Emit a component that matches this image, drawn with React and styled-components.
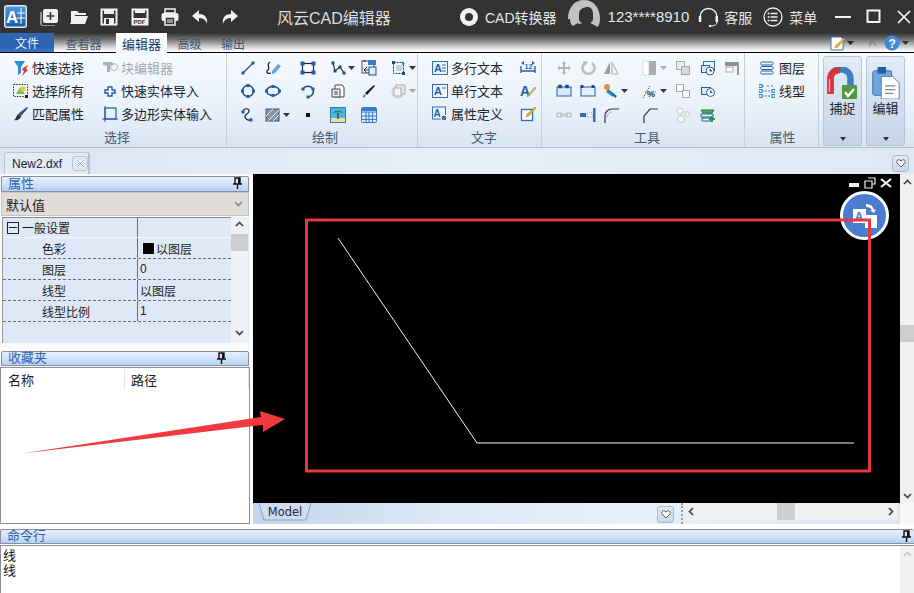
import React from "react";
import styled, { createGlobalStyle } from "styled-components";

const FONT = `"Liberation Sans","Noto Sans CJK SC",sans-serif`;
const Global = createGlobalStyle`
  html,body{margin:0;padding:0;background:#fff;overflow:hidden;}
  *{box-sizing:border-box;}
`;
const Page = styled.div`
  position:relative;width:914px;height:593px;overflow:hidden;display:flex;flex-direction:column;
  font-family:${FONT};font-size:13px;color:#1d1d1d;background:#fff;
`;
/* ---------- title bar ---------- */
const TitleBar = styled.header`
  height:33px;flex:none;background:#333;display:flex;align-items:center;color:#e4e4e4;
`;
const Logo = styled.div`margin-left:4px;width:23px;height:23px;flex:none;display:flex;`;
const QuickTools = styled.div`
  margin-left:13px;display:grid;grid-template-columns:repeat(7,18px);column-gap:12.2px;align-items:center;
  width:196px;flex:none;
`;
const AppTitle = styled.div`margin-left:41px;width:114px;flex:none;font-size:16px;color:#dcdcdc;white-space:nowrap;letter-spacing:0;`;
const ConvertIcon = styled.div`margin-left:69px;width:18px;height:18px;flex:none;display:flex;`;
const TopLabel = styled.span`font-size:${p=>p.$size||14}px;margin-left:${p=>p.$ml||0}px;white-space:nowrap;flex:none;color:#e6e6e6;`;
const Avatar = styled.div`margin-left:11px;width:32px;height:33px;flex:none;display:flex;`;
const TopIcon = styled.div`margin-left:${p=>p.$ml}px;width:${p=>p.$w}px;height:20px;flex:none;display:flex;`;
const WinButtons = styled.div`margin-left:18px;display:grid;grid-template-columns:16px 16px 14px;column-gap:15px;align-items:center;flex:none;`;

/* ---------- ribbon tabs ---------- */
const TabRow = styled.nav`
  height:20px;flex:none;display:flex;align-items:flex-end;position:relative;
  background:linear-gradient(180deg,#333 0%,#6e6e6e 30%,#c8c8c8 65%,#fff 92%,#fff 94%,#000 95%,#000 100%);
`;
const FileTab = styled.div`
  width:54px;height:19px;background:linear-gradient(180deg,#2f68b5,#2a62b0 70%,#3a74c2);color:#e8f0fb;font-size:12px;
  display:flex;align-items:center;justify-content:center;align-self:flex-start;margin-top:0;
`;
const RibbonTab = styled.div`
  font-size:${p=>p.$active?13:12}px;color:${p=>p.$active?"#1d3f63":"#3f556e"};margin-left:${p=>p.$ml}px;
  height:20px;padding:0 6px;display:flex;align-items:center;white-space:nowrap;flex:none;
  background:${p=>p.$active?"linear-gradient(180deg,#fff,#f4f8fd)":"transparent"};
  width:${p=>p.$w}px;justify-content:center;
`;
const TabTools = styled.div`margin-left:auto;display:flex;align-items:center;height:19px;padding-right:5px;align-self:flex-start;`;

/* ---------- ribbon ---------- */
const Ribbon = styled.section`
  height:95px;flex:none;display:flex;background:linear-gradient(180deg,#f7fafe 0%,#eaf1fa 55%,#d9e4f3 100%);
  border-bottom:1px solid #b4bfcc;
`;
const Group = styled.div`
  width:${p=>p.$w}px;flex:none;display:flex;flex-direction:column;border-right:${p=>p.$noline?"0":"1px solid #c5d0de"};
  padding-left:${p=>p.$pl||0}px;padding-top:3px;
`;
const GroupBody = styled.div`height:73px;display:flex;`;
const GroupLabel = styled.div`
  height:18px;font-size:13px;line-height:18px;text-align:center;color:#4a5a6c;margin-left:${p=>-(p.$pl||0)}px;padding-left:${p=>p.$dx||0}px;
`;
const TextCol = styled.div`display:grid;grid-template-rows:repeat(3,23px);grid-auto-rows:23px;margin-right:${p=>p.$mr||0}px;`;
const Cmd = styled.div`
  display:flex;align-items:center;gap:3px;font-size:13px;white-space:nowrap;color:${p=>p.$off?"#a3a8ae":"#20252b"};
`;
const IconGrid = styled.div`
  display:grid;grid-template-columns:${p=>p.$cols};grid-template-rows:23.5px 23.5px 23px;align-items:center;justify-items:start;
`;
const Cell = styled.div`display:flex;align-items:center;`;
const BigButtons = styled.div`display:flex;gap:4px;padding:3px 0 0 4px;`;
const BigButton = styled.div`
  width:39px;height:90px;border:1px solid #b6c6da;border-radius:3px;background:linear-gradient(180deg,#e3ebf6,#cfdcec 65%,#c5d5e9);
  display:flex;flex-direction:column;align-items:center;padding-top:10px;font-size:13px;color:#20252b;
`;
const BigLabel = styled.div`margin-top:2px;white-space:nowrap;line-height:15px;`;
const BigCaret = styled.div`margin-top:auto;margin-bottom:4px;width:0;height:0;border:3px solid transparent;border-top:4px solid #333;border-bottom:0;`;

/* ---------- document strip ---------- */
const DocStrip = styled.div`
  height:26px;flex:none;background:linear-gradient(90deg,#dbe5f2,#e8eff8 50%,#dfe8f4);display:flex;align-items:flex-end;position:relative;
`;
const DocTab = styled.div`
  margin-left:4px;width:86px;height:22px;background:#e4ebf4;border:1px solid #bcc8d6;border-bottom:0;border-radius:3px 3px 0 0;
  display:flex;align-items:center;padding-left:7px;font-size:12px;color:#223;border-right:2px solid #b5c1d0;
`;
const DocClose = styled.div`
  margin-left:10px;width:16px;height:15px;border:1px solid #b6c6d8;border-radius:3px;background:#dce6f2;display:flex;align-items:center;justify-content:center;
`;
const HeartBtn = styled.div`
  width:17px;height:17px;border:1px solid #a9bcd2;border-radius:3px;background:linear-gradient(180deg,#dfe9f5,#c8d8ea);
  display:flex;align-items:center;justify-content:center;flex:none;
`;
const DocHeart = styled.div`margin-left:auto;margin-right:5px;margin-bottom:2px;`;

/* ---------- main ---------- */
const Main = styled.main`height:350px;flex:none;display:flex;`;
const LeftCol = styled.aside`width:250px;flex:none;display:flex;flex-direction:column;background:#fafafa;padding-top:2px;`;
const DockTitle = styled.div`
  height:${p=>p.$h||16}px;flex:none;margin:0 1px;border:1px solid #8b8f96;border-radius:2px 2px 0 0;display:flex;align-items:center;justify-content:space-between;
  padding:0 ${p=>p.$pr||6}px 2px 6px;font-size:13px;line-height:1;color:#2f62a8;background:linear-gradient(180deg,#e6effc,#cfe1fa 55%,#b4d0f7);
`;
const Combo = styled.div`
  height:24px;flex:none;margin:0 1px;background:#dfdcd9;border:1px solid #c4c4c4;display:flex;align-items:center;justify-content:space-between;
  padding:0 5px 0 4px;font-size:13px;color:#222;
`;
const PropArea = styled.div`
  height:126px;flex:none;margin:1px 1px 0 2px;display:flex;background:#dfe8f6;border-left:1px solid #9a9a9a;
`;
const PropTable = styled.div`width:228px;flex:none;display:flex;flex-direction:column;`;
const PropRow = styled.div`
  height:${p=>p.$h||21}px;flex:none;display:grid;grid-template-columns:135px 1fr;font-size:12px;
  border-bottom:${p=>p.$head?"1px solid #f4f7fc":"1px dashed #6d6f73"};
  border-top:${p=>p.$head?"1px solid #8a8a8a":"0"};
`;
const PropName = styled.div`
  display:flex;align-items:center;padding-left:${p=>p.$head?4:39}px;border-right:1px solid #6d6f73;gap:3px;white-space:nowrap;
`;
const PropValue = styled.div`display:flex;align-items:center;padding-left:2px;gap:2px;white-space:nowrap;`;
const ColorSwatch = styled.span`width:11px;height:11px;background:#000;margin-left:3px;flex:none;`;
const Expander = styled.span`
  width:12px;height:12px;border:1px solid #222;display:flex;align-items:center;justify-content:center;flex:none;
  &::before{content:"";width:8px;height:1px;background:#222;}
`;
const VScroll = styled.div`
  width:${p=>p.$w||17}px;flex:none;background:${p=>p.$bg||"#eef1f7"};display:flex;flex-direction:column;align-items:center;padding:${p=>p.$pad||"4px 0 7px"};
`;
const VThumb = styled.div`
  width:100%;height:17px;background:#cdcdcd;margin-top:${p=>p.$mt}px;flex:none;
`;
const ScrollEnd = styled.div`margin-top:auto;display:flex;`;
const Gap = styled.div`height:${p=>p.$h}px;flex:none;`;
const ListBox = styled.div`
  flex:1;margin:1px 0 0 0;width:250px;background:#fff;border:1px solid #8b8f96;border-bottom:1px solid #8b8f96;
`;
const ListHead = styled.div`display:grid;grid-template-columns:124px 1fr;height:20px;align-items:center;font-size:13px;margin-top:1px;`;
const ListCol = styled.div`padding-left:${p=>p.$pl}px;height:20px;display:flex;align-items:center;border-right:1px solid #e4e4e4;`;
const CanvasCol = styled.div`margin-left:3px;width:647px;flex:none;display:flex;flex-direction:column;`;
const CanvasArea = styled.div`height:329px;flex:none;background:#000;position:relative;`;
const CanvasDrawing = styled.svg`display:block;width:647px;height:329px;`;
const MdiButtons = styled.div`position:absolute;top:3px;right:8px;display:flex;gap:4px;align-items:center;`;
const FloatBadge = styled.div`
  position:absolute;left:587px;top:17px;width:49px;height:49px;border-radius:50%;border:3px solid #fff;background:#4a7cd0;
  display:flex;align-items:center;justify-content:center;
`;
const TabStrip = styled.div`
  height:21px;flex:none;background:linear-gradient(90deg,#c3d5ea 0%,#dce8f5 30%,#e8f1fb 60%,#dbe6f3 100%);display:flex;align-items:flex-start;
`;
const ModelTab = styled.div`
  position:relative;margin-left:5px;width:54px;height:18px;flex:none;font-size:11.5px;color:#1e2a44;display:flex;align-items:center;justify-content:center;
  font-family:"DejaVu Sans",sans-serif;
`;
const ModelShape = styled.svg`position:absolute;inset:0;width:54px;height:18px;`;
const ModelText = styled.span`position:relative;`;
const HeartSlot = styled.div`margin-left:345px;margin-top:3px;`;
const DottedSep = styled.div`margin-left:7px;width:2px;height:21px;border-left:2px dotted #8fa0b3;flex:none;`;
const HScroll = styled.div`
  margin-left:1px;width:214px;height:17px;flex:none;background:#f0f0f0;display:flex;align-items:center;justify-content:space-between;padding:0 4px;position:relative;
`;
const HThumb = styled.div`position:absolute;left:93px;top:0;width:18px;height:17px;background:#cdcdcd;`;
const RightBar = styled.div`
  width:14px;flex:none;height:329px;background:#f0f0f0;display:flex;flex-direction:column;align-items:center;padding:5px 0 4px;
`;
const RightFill = styled.div`flex:1;width:14px;background:#f8f8f8;`;
const RightSide = styled.div`display:flex;flex-direction:column;width:14px;flex:none;background:#fff;`;

/* ---------- command ---------- */
const Spacer = styled.div`height:5px;flex:none;background:#fff;`;
const CmdPanel = styled.section`height:64px;flex:none;display:flex;flex-direction:column;`;
const CmdBar = styled(DockTitle)`margin:0;border-left:1px solid #8b8f96;border-right:0;padding-right:3px;height:15px;`;
const CmdBody = styled.div`flex:1;display:flex;margin-top:1px;border-top:1px solid #8b8f96;border-left:1px solid #8b8f96;background:#fff;`;
const CmdText = styled.div`flex:1;padding:2px 0 0 2px;font-size:13px;line-height:15px;color:#111;`;

/* ---------- overlay ---------- */
const Annot = styled.svg`position:absolute;left:0;top:0;width:914px;height:593px;pointer-events:none;`;

/* ---------- icons ---------- */
const Svg = ({w=16,h=16,vb,children})=>(<svg width={w} height={h} viewBox={vb||`0 0 ${w} ${h}`} style={{display:"block",flex:"none"}}>{children}</svg>);
const B="#1f5ea8", D="#174a8a", G="#a9adb2";
const handle=(x,y,c=B,s=3)=><rect x={x-s/2} y={y-s/2} width={s} height={s} fill={c}/>;
const Caret=({c="#333"})=><svg width="7" height="4" viewBox="0 0 7 4" style={{marginLeft:2,flex:"none"}}><path d="M0 0h7L3.5 4z" fill={c}/></svg>;

const I={
 funnel:<Svg><path d="M1 1h11L8 7v6L5 15V7z" fill="#2e8fd0"/><path d="M10 8l5-3-2 4 2 1-6 6 2-5-2-1z" fill="#e23a3a"/></Svg>,
 selAll:<Svg><rect x=".5" y="1.5" width="14" height="12" fill="none" stroke="#333" strokeDasharray="1.5 1.2"/><path d="M3 11l4-7 5 7z" fill="#7ec24c"/><path d="M7 4h5v4H7z" fill="#e8c24a"/><rect x="12" y="12" width="3" height="3" fill="#222"/></Svg>,
 brush:<Svg><path d="M14 1l1 1-7 8-3-2z" fill="#2c4f8a"/><path d="M5 8l3 2c0 3-4 5-7 4 2-1 2-4 4-6z" fill="#333"/></Svg>,
 block:<Svg><path d="M1 2h9l2 3-4 1v6H5V6L1 5z" fill="#b0b0b0"/><circle cx="12" cy="7" r="3.5" fill="none" stroke="#b5b5b5"/></Svg>,
 cross:<Svg><path d="M6 4h4v3h3v3h-3v3H6v-3H3V7h3z" fill="#fff" stroke={B} strokeWidth="1.4"/></Svg>,
 poly:<Svg><rect x="3" y="2" width="11" height="11" fill="none" stroke={B} strokeWidth="1.2"/><path d="M0 13h16M3 0v16" stroke={B}/></Svg>,
 line:<Svg><path d="M3 13L13 3" stroke={D} strokeWidth="1.3"/>{handle(3,13)}{handle(13,3)}</Svg>,
 pline:<Svg><path d="M5 2C0 5 7 8 2 11c-1 2 2 3 4 2" stroke="#223" fill="none" strokeWidth="1.2"/><path d="M7 11l6-7 3 2-6 7-3 1z" fill="#6a9fd8"/></Svg>,
 circle:<Svg><circle cx="8" cy="8" r="5.5" fill="none" stroke={D} strokeWidth="1.4"/>{handle(8,2.5)}{handle(2.5,8)}{handle(13.5,8)}{handle(8,13.5)}</Svg>,
 ellipse:<Svg><ellipse cx="8" cy="8" rx="6.5" ry="4.5" fill="none" stroke={D} strokeWidth="1.4"/>{handle(8,3.5)}{handle(1.5,8)}{handle(14.5,8)}{handle(8,12.5)}</Svg>,
 spline:<Svg><path d="M3 4c1-3 6-3 6 0 0 3-5 3-4 6 1 3 4 4 6 2" fill="none" stroke="#223" strokeWidth="1.2"/>{handle(3,5)}{handle(11,13)}</Svg>,
 hatch:<Svg><rect x="1" y="2" width="13" height="12" fill="#8f949a" stroke={B}/><path d="M1 9l7-7M3 14L14 3M8 14l6-6" stroke="#e8e8e8"/></Svg>,
 rect:<Svg><rect x="2.5" y="3.5" width="11" height="9" fill="none" stroke="#223" strokeWidth="1.2"/>{handle(2.5,3.5,B,4)}{handle(13.5,3.5,B,4)}{handle(2.5,12.5,B,4)}{handle(13.5,12.5,B,4)}</Svg>,
 polyline:<Svg><path d="M3 3l2 8 5-4 4 6" fill="none" stroke="#334" strokeWidth="1.2"/>{handle(3,3,D,3)}{handle(5,11,D,3)}{handle(10,7,D,3)}{handle(14,13,D,3)}</Svg>,
 arc:<Svg><path d="M3 6a6 6 0 0 1 10 0 6 6 0 0 1-4 8" fill="none" stroke={D} strokeWidth="1.4"/>{handle(3,6)}{handle(13,6)}{handle(8,14)}</Svg>,
 doc3d:<Svg><path d="M5 2h7l2 2v10H5z" fill="#fff" stroke="#445"/><path d="M2 6h8v8H2z" fill="#eee" stroke="#445"/><path d="M4 9h4M4 11h4" stroke="#445"/></Svg>,
 dot:<Svg><rect x="6" y="6" width="4" height="4" fill="#111"/></Svg>,
 image:<Svg><rect x=".5" y=".5" width="15" height="15" fill="#47b7e8" stroke="#3a78b8"/><rect x="1" y="11" width="14" height="4" fill="#f3df9a"/><path d="M8 12V6" stroke="#5a3a1a" strokeWidth="1.4"/><path d="M3 6c2-3 8-3 10 0-3-1-7-1-10 0z" fill="#1d8a3a"/></Svg>,
 pen:<Svg><path d="M13 2l1 1-8 9-2-2z" fill="#1c1c1c"/><path d="M3 11l2 2-3 2z" fill="#2a5aa0"/></Svg>,
 table:<Svg><rect x=".5" y=".5" width="15" height="15" fill="#dbeafb" stroke="#3a78c8" rx="1"/><path d="M1 5h14M1 9h14M1 12.5h14M5 5v11M8 5v11M11.5 5v11" stroke="#3a78c8"/><rect x="1" y="1" width="14" height="3" fill="#3a78c8"/></Svg>,
 copyA:<Svg><rect x="1" y="1" width="12" height="12" fill="#f2f6fb" stroke="#2c4f8a"/><rect x="7" y="0" width="8" height="5" fill="#3a78c8"/><rect x="2" y="0" width="3" height="2" fill="#d33"/><path d="M3 10h7M6 7l-3 3 3 3" stroke="#333" fill="none"/><rect x="8" y="7" width="7" height="8" fill="#dfeafa" stroke="#2c4f8a"/></Svg>,
 stamp:<Svg><rect x="2.5" y="2.5" width="10" height="11" fill="none" stroke="#334" strokeDasharray="2 1"/><rect x="5" y="5" width="6" height="6" fill="#b8d4f2"/><path d="M11 1l3 3-3 1z" fill="#3a78c8"/>{handle(2.5,2.5,D)}{handle(12.5,13.5,D)}</Svg>,
 offcopy:<Svg><circle cx="7" cy="9" r="6" fill="#ededed" stroke="#c8c8c8"/><rect x="5" y="2" width="9" height="9" fill="#e4e4e4" stroke={G}/><rect x="3" y="5" width="7" height="8" fill="#f4f4f4" stroke={G}/></Svg>,
 mtext:<Svg><rect x=".5" y="1.5" width="15" height="13" fill="#eef5fd" stroke="#2f6eb8"/><text x="2" y="12" fontSize="11" fontFamily="Liberation Sans" fill="#1f5ea8" fontWeight="700">A</text><path d="M10 5h4M10 8h4M10 11h4" stroke="#2f6eb8"/></Svg>,
 stext:<Svg><rect x=".5" y="1.5" width="15" height="13" fill="#eef5fd" stroke="#2f6eb8"/><text x="2" y="12" fontSize="11" fontFamily="Liberation Sans" fill="#1f5ea8" fontWeight="700">A</text><path d="M10 5h4" stroke="#2f6eb8"/></Svg>,
 attr:<Svg><rect x=".5" y="1" width="13" height="12" fill="#eef5fd" stroke="#2f6eb8"/><text x="1.5" y="11" fontSize="10" fontFamily="Liberation Sans" fill="#1f5ea8" fontWeight="700">A</text><circle cx="12" cy="12" r="3" fill="#5b6f88" stroke="#fff"/></Svg>,
 dimtext:<Svg><text x="4.5" y="9" fontSize="7" fontFamily="Liberation Sans" fontWeight="700" fill="#1f5ea8">12</text><path d="M1 11h14M1 6v7M15 6v7" stroke="#1f5ea8" strokeWidth="1.3"/><path d="M1 3l3 2v-4zM15 3l-3 2v-4z" fill="#1f5ea8"/></Svg>,
 textstyle:<Svg><text x="0" y="13" fontSize="14" fontFamily="Liberation Sans" fontWeight="700" fill="#2c5a9c">A</text><path d="M15 4l1 1-7 8-2 1 1-2z" fill="#e7b534" stroke="#8a6a1a" strokeWidth=".4"/></Svg>,
 note:<Svg><rect x="1.5" y="3.5" width="11" height="11" fill="#fff" stroke="#2f6eb8" strokeWidth="1.3"/><path d="M15 1l1 1-7 8-3 1 1-3z" fill="#e7b534" stroke="#8a6a1a" strokeWidth=".4"/></Svg>,
 move:<Svg><path d="M8 1l2.5 3H9v3h3V5.5L15 8l-3 2.5V9H9v3h1.5L8 15l-2.5-3H7V9H4v1.5L1 8l3-2.5V7h3V4H5.5z" fill="#b4b7bb"/></Svg>,
 rotate:<Svg><path d="M5 3a6 6 0 1 0 7 0" fill="none" stroke="#b9bcc0" strokeWidth="2.4"/><path d="M3 1l5 1-3 4z" fill="#b4b7bb"/></Svg>,
 mirror:<Svg><path d="M7 2v12H1z" fill="#9a9da1"/><path d="M9 2v12h6z" fill="#f4f4f4" stroke="#a9adb2"/></Svg>,
 layerG:<Svg><rect x="1" y="1" width="13" height="14" fill="#a9adb2"/><rect x="1" y="1" width="6" height="14" fill="#fff" stroke="#bbb" strokeDasharray="1 1"/></Svg>,
 twoG:<Svg><rect x="1.5" y="1.5" width="8" height="8" fill="#eee" stroke="#a4a7ab"/><rect x="6.5" y="6.5" width="8" height="8" fill="#d5d7da" stroke="#a4a7ab"/></Svg>,
 twoW:<Svg><rect x="1.5" y="1.5" width="7" height="7" fill="#fff" stroke="#a4a7ab"/><rect x="7.5" y="7.5" width="7" height="7" fill="#fff" stroke="#a4a7ab"/></Svg>,
 clock1:<Svg><rect x="3.5" y="1.5" width="11" height="9" fill="#eef5fd" stroke="#2f6eb8"/><rect x="1.5" y="5.5" width="8" height="7" fill="#dbeafb" stroke="#1f5ea8"/><circle cx="10" cy="11" r="4" fill="#fff" stroke="#1f5ea8"/><path d="M10 9v2h2" stroke="#1f5ea8"/></Svg>,
 clock2:<Svg><rect x="1.5" y="4.5" width="9" height="7" fill="#dbeafb" stroke="#1f5ea8"/><circle cx="10.5" cy="9.5" r="4" fill="#fff" stroke="#1f5ea8"/><path d="M10.5 7.5v2h2" stroke="#1f5ea8"/></Svg>,
 tbar:<Svg><rect x="1" y="2" width="12" height="4" fill="#8f8f8f"/><rect x="2" y="7" width="7" height="5" fill="#fff" stroke="#aaa"/><rect x="13" y="2" width="2" height="13" fill="#9a9a9a"/></Svg>,
 trimL:<Svg><rect x="1" y="4" width="14" height="9" fill="#dbeafb" stroke={B}/>{handle(4,3.5,D,3.5)}{handle(11,3.5,D,3.5)}</Svg>,
 trimR:<Svg><rect x="1" y="4" width="14" height="9" fill="#e6f0fb" stroke={B}/>{handle(2,3.5,D,3)}{handle(13,3.5,D,3)}</Svg>,
 paint:<Svg><circle cx="4" cy="4" r="3" fill="#ef8a2a"/><path d="M5 6l7 5-2 3-7-5z" fill="#2f7fc8"/><path d="M10 11l4 2-2 2z" fill="#164a8a"/></Svg>,
 scale:<Svg><path d="M1 15L8 3" stroke="#555" strokeDasharray="1.5 1"/><text x="5" y="14" fontSize="9" fontFamily="Liberation Sans" fontWeight="700" fill="#333">%</text><path d="M3 9h11" stroke="#777" strokeDasharray="1 1"/></Svg>,
 dots:<Svg><rect x="1" y="6" width="4" height="4" fill="none" stroke="#b5b5b5"/><rect x="6" y="7" width="4" height="2" fill="none" stroke="#b5b5b5"/><rect x="11" y="6" width="4" height="4" fill="none" stroke="#b5b5b5"/></Svg>,
 stretch:<Svg><rect x="0" y="6" width="6" height="4" fill="#2f6eb8"/><rect x="7" y="6" width="5" height="4" fill="#fff" stroke="#999" strokeDasharray="1 1"/><rect x="13" y="1" width="2.5" height="14" fill="#2f6eb8"/></Svg>,
 fillet:<Svg><path d="M2 16V9C2 5 5 2 9 2h7" fill="none" stroke="#334" strokeWidth="1.2"/><path d="M4 10c0-2 2-5 5-5" fill="none" stroke="#3a78c8" strokeDasharray="1 1"/></Svg>,
 chamfer:<Svg><path d="M2 16V9l6-7h8" fill="none" stroke="#334" strokeWidth="1.2"/><path d="M3 8l5-5" stroke="#3a78c8" strokeDasharray="1 1"/></Svg>,
 balls:<Svg><circle cx="5" cy="4" r="3" fill="#f6f6f6" stroke="#c8c8c8"/><circle cx="6" cy="12" r="3.5" fill="#f6f6f6" stroke="#c4c4c4"/><circle cx="12" cy="7" r="2.5" fill="#efefef" stroke="#ccc"/></Svg>,
 layAdd:<Svg><path d="M1 3h13l-2 3H3z" fill="#4fb25a" stroke="#2a7a33"/><path d="M1 7h12v3H1zM2 11h9v3H2z" fill="#e7f2fb" stroke="#1f5ea8"/><path d="M9 12h6M12 9v6" stroke="#1f9a2d" strokeWidth="2"/></Svg>,
 layers:<Svg><path d="M3 2h9c3 0 3 3 0 3H3C1 5 1 2 3 2zM3 6.5h9c3 0 3 3 0 3H3c-2 0-2-3 0-3zM3 11h9c3 0 3 3 0 3H3c-2 0-2-3 0-3z" fill="#f0f6fd" stroke="#1f5ea8"/></Svg>,
 ltype:<Svg><path d="M3 3h3M8 3h2M12 3h2M3 8h10M3 13h10" stroke="#3a78c8" strokeDasharray="2 1"/><rect x="0" y="1.5" width="3" height="3" fill="none" stroke="#1f8ad0"/><rect x="0" y="6.5" width="3" height="3" fill="none" stroke="#1f8ad0"/><rect x="0" y="11.5" width="3" height="3" fill="none" stroke="#1f8ad0"/><rect x="13" y="11.5" width="3" height="3" fill="none" stroke="#1f8ad0"/><rect x="13" y="6.5" width="3" height="3" fill="none" stroke="#1f8ad0"/></Svg>,
};
const Magnet=()=><Svg w={31} h={32}><path d="M3.500 27V12C3.500 -1 23.500 -1 23.500 12v8" fill="none" stroke="#3f7fc4" strokeWidth="6.500"/><path d="M3.500 27V12C3.500 3 13 3 13 3" fill="none" stroke="#d8353a" strokeWidth="6.500"/><path d="M2.500 25V12" stroke="#f6a6a8" strokeWidth="1.400"/><rect x="15" y="18" width="15" height="14" rx="1" fill="#4c9a43"/><path d="M18 25l3 4 6-7" fill="none" stroke="#fff" strokeWidth="2.400"/></Svg>;
const Clipboard=()=><Svg w={30} h={32} vb="0 0 30 34"><rect x="1" y="4" width="20" height="26" rx="2" fill="#6da7de" stroke="#2d6bb0"/><rect x="6" y="0" width="9" height="7" fill="#1f5ea8"/><path d="M10 10h12l7 7v17H10z" fill="#fff" stroke="#5a7fa8"/><path d="M14 20h11M14 24h11M14 28h9" stroke="#888" strokeWidth="1.4"/></Svg>;
const Chev=({up,c="#444"})=><svg width="9" height="6" viewBox="0 0 9 6" style={{display:"block",flex:"none"}}><path d={up?"M1 5l3.5-3.5L8 5":"M1 1l3.5 3.5L8 1"} fill="none" stroke={c} strokeWidth="1.7"/></svg>;
const ChevH=({right})=><svg width="6" height="9" viewBox="0 0 6 9" style={{display:"block"}}><path d={right?"M1 1l3.5 3.5L1 8":"M5 1L1.5 4.5 5 8"} fill="none" stroke="#444" strokeWidth="1.7"/></svg>;
const Pin=()=><svg width="9" height="12" viewBox="0 0 9 12" style={{display:"block",flex:"none"}}><path d="M2 1h5v6H2zM0 7h9M4.5 7v5" fill="none" stroke="#111" strokeWidth="1.4"/><rect x="5" y="1" width="2" height="6" fill="#111"/></svg>;
const Heart=()=><svg width="10" height="9" viewBox="0 0 10 9" style={{display:"block"}}><path d="M5 8L1 4c-1-2 1-4 2.500-3L5 2l1.500-1C8-0 10 2 9 4z" fill="#fff" stroke="#5a5a40"/></svg>;

const S="#f1f1f1";
const TopI={
 add:<Svg w={18} h={18}><rect x="3" y="1" width="15" height="14" rx="2" fill={S}/><path d="M1 4v12c0 1 1 2 2 2h12" fill="none" stroke={S}/><path d="M10.500 4v8M6.500 8h8" stroke="#333" strokeWidth="1.6"/></Svg>,
 open:<Svg w={18} h={18}><path d="M1 3h6l2 2h7v2H5L1 15z" fill={S}/><path d="M4 8h14l-3 8H0z" fill={S}/></Svg>,
 save:<Svg w={18} h={18}><path d="M1.500 1.500h15v15h-15z" fill="none" stroke={S} strokeWidth="2"/><rect x="4" y="1" width="10" height="5" fill={S}/><rect x="4" y="10" width="10" height="7" fill={S}/><rect x="6" y="11" width="3" height="5" fill="#333"/></Svg>,
 pdf:<Svg w={18} h={18}><path d="M1.500 1.500h15v15h-15z" fill="none" stroke={S} strokeWidth="2"/><rect x="4" y="1" width="10" height="4" fill={S}/><rect x="1" y="10" width="16" height="7" fill={S}/><text x="2.500" y="16" fontSize="6" fontFamily="Liberation Sans" fontWeight="700" fill="#333">PDF</text></Svg>,
 print:<Svg w={18} h={18}><rect x="4" y="1" width="10" height="4" fill="none" stroke={S} strokeWidth="1.500"/><rect x="0.500" y="5" width="17" height="8" rx="2" fill={S}/><rect x="4" y="9" width="10" height="8" fill="#333" stroke={S} strokeWidth="1.500"/><path d="M6 12h6M6 14h6" stroke={S}/></Svg>,
 undo:<Svg w={18} h={18}><path d="M8 2L1 8l7 6v-4c4 0 7 2 8 6 1-6-2-10-8-10z" fill={S}/></Svg>,
 redo:<Svg w={18} h={18}><path d="M10 2l7 6-7 6v-4c-4 0-7 2-8 6-1-6 2-10 8-10z" fill={S}/></Svg>,
};

const draw=[
 ["line","pline","rect","polyline","copyA","stamp"],
 ["circle","ellipse","arc","doc3d","pen","offcopy"],
 ["spline","hatch","dot","image","table",null],
];
const drawCaret={ "polyline":1,"stamp":1,"hatch":1,"offcopy":1 };
const tools=[
 ["move","rotate","mirror","layerG","twoG","clock1","tbar"],
 ["trimL","trimR","paint","scale","twoW","clock2",null],
 ["dots","stretch","fillet","chamfer","balls","layAdd",null],
];
const toolCaret={ "layerG":"#aaa","paint":"#333","scale":"#333" };

export default function App(){
  return (
    <Page>
      <Global/>
      <TitleBar>
        <Logo>
          <svg width="23" height="23" viewBox="0 0 23 23"><defs><linearGradient id="lg" x1="0" y1="0" x2="0" y2="1"><stop offset="0" stopColor="#4b9ae0"/><stop offset="1" stopColor="#1c5aa8"/></linearGradient></defs><rect x=".7" y=".7" width="21.600" height="21.600" rx="2" fill="url(#lg)" stroke="#dfeaf6" strokeWidth="1.400"/><text x="2" y="18" fontSize="17" fontWeight="700" fontFamily="Liberation Sans" fill="#fff">A</text><path d="M17 3v16M13 8h8M13 13h8" stroke="#fff" strokeWidth="1"/></svg>
        </Logo>
        <QuickTools>
          {Object.keys(TopI).map(k=><Cell key={k}>{TopI[k]}</Cell>)}
        </QuickTools>
        <AppTitle>风云CAD编辑器</AppTitle>
        <ConvertIcon><svg width="18" height="18" viewBox="0 0 18 18"><circle cx="9" cy="9" r="9" fill="#f1f1f1"/><circle cx="9" cy="9" r="4" fill="#333"/></svg></ConvertIcon>
        <TopLabel $size={14} $ml={7}>CAD转换器</TopLabel>
        <Avatar><svg width="32" height="33" viewBox="0 0 32 33"><path fillRule="evenodd" d="M0 19C0 8 6 0 16 0s16 8 16 19c0 3-1 6-2 8l-8-4c2-1 3-2 3-4V14c0-4-2-7-5-7s-9 1-9 7v5c0 2 1 3 3 4l-8 4c-3-2-4-5-4-8z" fill="#c2c2c2"/><path d="M10 23l-7 4 3 3h20l3-3-7-4c-3 3-9 3-12 0z" fill="#333"/></svg></Avatar>
        <TopLabel $size={15} $ml={8}>123****8910</TopLabel>
        <TopIcon $ml={9} $w={21}><svg width="21" height="20" viewBox="0 0 21 20"><path d="M2 13V10a8.500 8.500 0 0 1 17 0v3" fill="none" stroke="#f1f1f1" strokeWidth="1.400"/><rect x="0.800" y="9" width="2.500" height="6" fill="#f1f1f1"/><rect x="17.500" y="9" width="2.500" height="6" fill="#f1f1f1"/><path d="M19 15c0 3-3 4-6 4" fill="none" stroke="#f1f1f1"/><circle cx="12" cy="19" r="1.200" fill="#f1f1f1"/></svg></TopIcon>
        <TopLabel $ml={5}>客服</TopLabel>
        <TopIcon $ml={11} $w={20}><svg width="20" height="20" viewBox="0 0 20 20"><circle cx="10" cy="10" r="9" fill="none" stroke="#f1f1f1" strokeWidth="1.300"/><path d="M7.500 6.500h7M7.500 10h7M7.500 13.500h7" stroke="#f1f1f1" strokeWidth="1.400"/><circle cx="5.500" cy="6.500" r="1" fill="#f1f1f1"/><circle cx="5.500" cy="10" r="1" fill="#f1f1f1"/><circle cx="5.500" cy="13.500" r="1" fill="#f1f1f1"/></svg></TopIcon>
        <TopLabel $ml={6}>菜单</TopLabel>
        <WinButtons>
          <svg width="16" height="16" viewBox="0 0 16 16"><rect y="7" width="16" height="2" fill="#f4f4f4"/></svg>
          <svg width="16" height="16" viewBox="0 0 16 16"><rect x="1.500" y="1.500" width="12" height="11.500" fill="none" stroke="#f4f4f4" strokeWidth="2"/></svg>
          <svg width="14" height="14" viewBox="0 0 14 14"><path d="M1 1l12 12M13 1L1 13" stroke="#f4f4f4" strokeWidth="1.700"/></svg>
        </WinButtons>
      </TitleBar>

      <TabRow>
        <FileTab>文件</FileTab>
        <RibbonTab $ml={6} $w={47}>查看器</RibbonTab>
        <RibbonTab $ml={9} $w={51} $active>编辑器</RibbonTab>
        <RibbonTab $ml={5} $w={35}>高级</RibbonTab>
        <RibbonTab $ml={8} $w={36}>输出</RibbonTab>
        <TabTools>
          <Svg w={15} h={16}><path d="M1 2h10l2 2v11H1z" fill="#fff" stroke="#3f73b0"/><path d="M14 3l1 1-7 8-3 1 1-3z" fill="#e6c13a" stroke="#8a6a1a" strokeWidth=".4"/></Svg>
          <Caret c="#222"/>
          <svg width="9" height="8" viewBox="0 0 9 8" style={{marginLeft:14}}><path d="M1 5l3.500-3.500L8 5M1 7l3.500-3.500L8 7" fill="none" stroke="#777"/></svg>
          <svg width="16" height="16" viewBox="0 0 16 16" style={{marginLeft:7}}><circle cx="8" cy="8" r="7.500" fill="#3f88dc"/><text x="4.500" y="12.500" fontSize="12" fontWeight="700" fontFamily="Liberation Sans" fill="#fff">?</text></svg>
          <Caret c="#333"/>
        </TabTools>
      </TabRow>

      <Ribbon>
        <Group $w={227} $pl={13}>
          <GroupBody>
            <TextCol $mr={18}>
              <Cmd>{I.funnel}快速选择</Cmd>
              <Cmd>{I.selAll}选择所有</Cmd>
              <Cmd>{I.brush}匹配属性</Cmd>
            </TextCol>
            <TextCol>
              <Cmd $off>{I.block}块编辑器</Cmd>
              <Cmd>{I.cross}快速实体导入</Cmd>
              <Cmd>{I.poly}多边形实体输入</Cmd>
            </TextCol>
          </GroupBody>
          <GroupLabel $pl={13} $dx={8}>选择</GroupLabel>
        </Group>
        <Group $w={191} $pl={13}>
          <GroupBody>
            <IconGrid $cols="25px 35px 30px 31px 30px 30px">
              {draw.flat().map((k,i)=><Cell key={i}>{k&&I[k]}{k&&drawCaret[k]&&<Caret c={k==="offcopy"?"#aaa":"#333"}/>}</Cell>)}
            </IconGrid>
          </GroupBody>
          <GroupLabel $pl={13} $dx={6}>绘制</GroupLabel>
        </Group>
        <Group $w={124} $pl={14}>
          <GroupBody>
            <TextCol $mr={17}>
              <Cmd>{I.mtext}多行文本</Cmd>
              <Cmd>{I.stext}单行文本</Cmd>
              <Cmd>{I.attr}属性定义</Cmd>
            </TextCol>
            <TextCol>
              <Cell>{I.dimtext}</Cell>
              <Cell>{I.textstyle}</Cell>
              <Cell>{I.note}</Cell>
            </TextCol>
          </GroupBody>
          <GroupLabel $pl={14} $dx={9}>文字</GroupLabel>
        </Group>
        <Group $w={203} $pl={14}>
          <GroupBody>
            <IconGrid $cols="24px 23px 39px 33px 25px 24px 16px">
              {tools.flat().map((k,i)=><Cell key={i}>{k&&I[k]}{k&&toolCaret[k]&&<Caret c={toolCaret[k]}/>}</Cell>)}
            </IconGrid>
          </GroupBody>
          <GroupLabel $pl={14} $dx={8}>工具</GroupLabel>
        </Group>
        <Group $w={74} $pl={14}>
          <GroupBody>
            <TextCol>
              <Cmd>{I.layers}<span style={{marginLeft:1}}>图层</span></Cmd>
              <Cmd>{I.ltype}<span style={{marginLeft:1}}>线型</span></Cmd>
            </TextCol>
          </GroupBody>
          <GroupLabel $pl={14} $dx={2}>属性</GroupLabel>
        </Group>
        <BigButtons>
          <BigButton><Magnet/><BigLabel>捕捉</BigLabel><BigCaret/></BigButton>
          <BigButton><Clipboard/><BigLabel>编辑</BigLabel><BigCaret/></BigButton>
        </BigButtons>
      </Ribbon>

      <DocStrip>
        <DocTab>New2.dxf<DocClose><svg width="9" height="9" viewBox="0 0 9 9"><path d="M1 1l7 7M8 1L1 8" stroke="#fff" strokeWidth="2"/><path d="M1 1l7 7M8 1L1 8" stroke="#666" strokeWidth=".6"/></svg></DocClose></DocTab>
        <DocHeart><HeartBtn><Heart/></HeartBtn></DocHeart>
      </DocStrip>

      <Main>
        <LeftCol>
          <DockTitle>属性<Pin/></DockTitle>
          <Combo>默认值<Chev c="#888"/></Combo>
          <PropArea>
            <PropTable>
              <PropRow $head $h={21}><PropName $head><Expander/>一般设置</PropName><PropValue/></PropRow>
              <PropRow><PropName>色彩</PropName><PropValue><ColorSwatch/>以图层</PropValue></PropRow>
              <PropRow><PropName>图层</PropName><PropValue>0</PropValue></PropRow>
              <PropRow><PropName>线型</PropName><PropValue>以图层</PropValue></PropRow>
              <PropRow><PropName>线型比例</PropName><PropValue>1</PropValue></PropRow>
            </PropTable>
            <VScroll>
              <Chev up/>
              <VThumb $mt={7}/>
              <ScrollEnd><Chev/></ScrollEnd>
            </VScroll>
          </PropArea>
          <Gap $h={8}/>
          <DockTitle $h={15} $pr={22}>收藏夹<Pin/></DockTitle>
          <ListBox>
            <ListHead>
              <ListCol $pl={7}>名称</ListCol>
              <ListCol $pl={6}>路径</ListCol>
            </ListHead>
          </ListBox>
        </LeftCol>
        <CanvasCol>
          <CanvasArea>
            <CanvasDrawing viewBox="0 0 647 329">
              <path d="M85 64L224 269H601" fill="none" stroke="#f4f4f4" strokeWidth="1"/>
            </CanvasDrawing>
            <MdiButtons>
              <svg width="12" height="8" viewBox="0 0 12 8"><rect x="1" y="4" width="10" height="4" fill="#eee"/></svg>
              <svg width="12" height="12" viewBox="0 0 12 12"><path d="M4 1h7v6H8M1 4h7v7H1z" fill="none" stroke="#eee" strokeWidth="1.200"/></svg>
              <svg width="12" height="10" viewBox="0 0 12 10"><path d="M1 1l10 8M11 1L1 9" stroke="#eee" strokeWidth="2.200"/></svg>
            </MdiButtons>
            <FloatBadge>
              <svg width="26" height="26" viewBox="0 0 26 26"><rect x="1" y="6" width="13" height="14" fill="#fff"/><text x="3" y="17" fontSize="11" fontWeight="700" fontFamily="Liberation Sans" fill="#4a7cd0">A</text><rect x="13" y="12" width="12" height="13" fill="#fff"/><path d="M14 1c4 0 7 2 8 6l2-1-2 4-4-3h2c-1-2-3-3-6-3z" fill="#fff"/></svg>
            </FloatBadge>
          </CanvasArea>
          <TabStrip>
            <ModelTab>
              <ModelShape viewBox="0 0 54 18"><path d="M1 0l5 17h42l5-17" fill="#cfdcec" stroke="#8fa3bb"/></ModelShape>
              <ModelText>Model</ModelText>
            </ModelTab>
            <HeartSlot><HeartBtn><Heart/></HeartBtn></HeartSlot>
            <DottedSep/>
            <HScroll><ChevH/><HThumb/><ChevH right/></HScroll>
          </TabStrip>
        </CanvasCol>
        <RightSide>
          <RightBar>
            <Chev up/>
            <VThumb $mt={140}/>
            <ScrollEnd><Chev/></ScrollEnd>
          </RightBar>
          <RightFill/>
        </RightSide>
      </Main>

      <Spacer/>
      <CmdPanel>
        <CmdBar>命令行<Pin/></CmdBar>
        <CmdBody>
          <CmdText>线<br/>线</CmdText>
          <VScroll $w={14} $bg="#f0f0f0" $pad="5px 0"><Chev up c="#c4c4c4"/></VScroll>
        </CmdBody>
      </CmdPanel>

      <Annot viewBox="0 0 914 593">
        <rect x="306.500" y="220" width="563" height="251" fill="none" stroke="#e5393e" strokeWidth="3"/>
        <path d="M22 453.500L261 417l-1-6 25 8-22 13v-7z" fill="#f03a3f"/>
      </Annot>
    </Page>
  );
}
